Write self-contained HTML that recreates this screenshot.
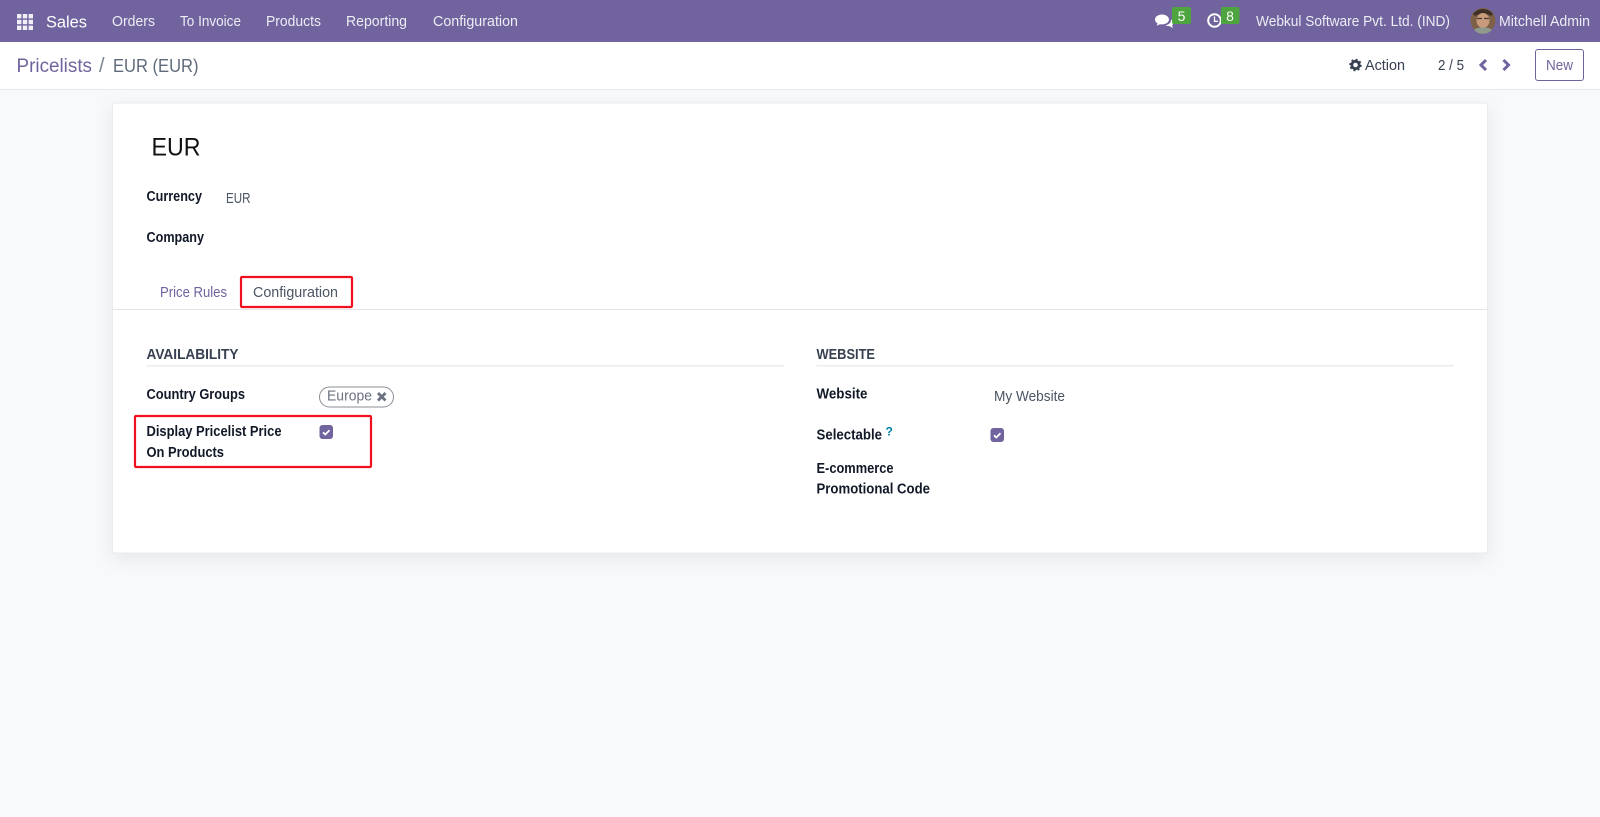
<!DOCTYPE html>
<html><head><meta charset="utf-8"><title>Pricelists</title>
<style>
html,body{margin:0;padding:0;width:1600px;height:817px;overflow:hidden;background:#f8f9fa}
svg{display:block;font-family:"Liberation Sans",sans-serif}
.n{fill:#eeecf4;font-size:14.5px}
.l{fill:#111827;font-size:14.5px;font-weight:700}
.v{fill:#4b5563;font-size:14.5px}
.h{fill:#374151;font-size:14.5px;font-weight:700}
</style></head><body>
<svg width="1600" height="817" viewBox="0 0 1600 817" xmlns="http://www.w3.org/2000/svg">
<defs><filter id="s" x="-5%" y="-10%" width="110%" height="125%"><feDropShadow dx="0" dy="5" stdDeviation="9" flood-color="#000" flood-opacity=".07"/></filter></defs>
<rect width="1600" height="817" fill="#f8f9fa"/>
<rect width="1600" height="42" fill="#71639e"/>
<rect y="42" width="1600" height="47" fill="#fff"/>
<rect y="89" width="1600" height="1" fill="#e7e9ed"/>

<g fill="#f1eff6">
<rect x="17" y="14" width="4.4" height="4.4"/><rect x="22.8" y="14" width="4.4" height="4.4"/><rect x="28.6" y="14" width="4.4" height="4.4"/>
<rect x="17" y="19.8" width="4.4" height="4.4"/><rect x="22.8" y="19.8" width="4.4" height="4.4"/><rect x="28.6" y="19.8" width="4.4" height="4.4"/>
<rect x="17" y="25.6" width="4.4" height="4.4"/><rect x="22.8" y="25.6" width="4.4" height="4.4"/><rect x="28.6" y="25.6" width="4.4" height="4.4"/>
</g>
<text x="46" y="27.500" fill="#fff" font-size="17" textLength="41" lengthAdjust="spacingAndGlyphs">Sales</text>
<text class="n" x="112" y="26" textLength="43" lengthAdjust="spacingAndGlyphs">Orders</text>
<text class="n" x="180" y="26" textLength="61" lengthAdjust="spacingAndGlyphs">To Invoice</text>
<text class="n" x="266" y="26" textLength="55" lengthAdjust="spacingAndGlyphs">Products</text>
<text class="n" x="346" y="26" textLength="61" lengthAdjust="spacingAndGlyphs">Reporting</text>
<text class="n" x="433" y="26" textLength="85" lengthAdjust="spacingAndGlyphs">Configuration</text>

<path d="M1162 14.500c-3.900 0-7 2.200-7 5 0 1.600 1 3 2.600 3.900l-.9 2.300 3.300-1.500c.6.100 1.300.2 2 .2 3.900 0 7-2.200 7-4.900s-3.100-5-7-5z" fill="#fff"/>
<path d="M1171 19.500c1.500.8 2.400 2 2.400 3.300 0 1-.5 1.900-1.400 2.600l1 2.600-4-2c-1.300 0-2.500-.3-3.500-.8 3.500-.4 5.800-2.800 5.500-5.700z" fill="#fff"/>
<rect x="1172" y="7" width="19" height="17" rx="2" fill="#4ea53f"/>
<text x="1181.500" y="21" fill="#fff" font-size="14" text-anchor="middle">5</text>
<circle cx="1214.500" cy="20.500" r="6.300" fill="none" stroke="#fff" stroke-width="2"/>
<path d="M1214.500 16.500v4.800h3.500" fill="none" stroke="#fff" stroke-width="1.300"/>
<rect x="1221" y="7" width="18.500" height="17" rx="2" fill="#4ea53f"/>
<text x="1230" y="21" fill="#fff" font-size="14" text-anchor="middle">8</text>
<text class="n" x="1256" y="26" textLength="194" lengthAdjust="spacingAndGlyphs">Webkul Software Pvt. Ltd. (IND)</text>
<circle cx="1483" cy="20.500" r="12.500" fill="#7d6046"/>
<path d="M1473 14a12.500 12.500 0 0 1 20 0l-2 2c-4-3-12-3-16 0z" fill="#3e3026"/>
<ellipse cx="1483" cy="20.500" rx="6.500" ry="7.500" fill="#c99b7c"/>
<path d="M1477 18.500h5M1484 18.500h5" stroke="#4a3b30" stroke-width="1.200"/>
<path d="M1474 30c3-3.500 15-3.500 18 0a12.500 12.500 0 0 1-18 0z" fill="#8f9a8c"/>
<text class="n" x="1499" y="26" textLength="91" lengthAdjust="spacingAndGlyphs">Mitchell Admin</text>

<text x="16.500" y="72" fill="#71639e" font-size="19.500" textLength="75.500" lengthAdjust="spacingAndGlyphs">Pricelists</text>
<text x="99" y="72" fill="#7b8490" font-size="20">/</text>
<text x="113" y="72" fill="#5f6b7a" font-size="18.500" textLength="85.500" lengthAdjust="spacingAndGlyphs">EUR (EUR)</text>

<circle cx="1355.500" cy="65" r="3.700" fill="none" stroke="#374151" stroke-width="2.800"/>
<circle cx="1355.500" cy="65" r="5.500" fill="none" stroke="#374151" stroke-width="1.500" stroke-dasharray="2 2.300"/>
<text x="1365" y="70" fill="#374151" font-size="14.500" textLength="40" lengthAdjust="spacingAndGlyphs">Action</text>
<text x="1438" y="70" fill="#374151" font-size="14.500" textLength="26" lengthAdjust="spacingAndGlyphs">2 / 5</text>
<path d="M1486 60l-5 5 5 5" fill="none" stroke="#71639e" stroke-width="3"/>
<path d="M1503.500 60l5 5-5 5" fill="none" stroke="#71639e" stroke-width="3"/>
<rect x="1535.500" y="49.500" width="48" height="31" rx="2.500" fill="#fff" stroke="#71639e"/>
<text x="1546" y="70" fill="#71639e" font-size="14.500" textLength="27" lengthAdjust="spacingAndGlyphs">New</text>

<rect x="112.500" y="103" width="1375" height="450" fill="#fff" stroke="#e9ebee" stroke-width="1" filter="url(#s)"/>

<text x="151.500" y="155.500" fill="#111" font-size="25" textLength="49" lengthAdjust="spacingAndGlyphs">EUR</text>
<text class="l" x="146.500" y="201" textLength="55.500" lengthAdjust="spacingAndGlyphs">Currency</text>
<text class="v" x="226" y="203" font-size="14" textLength="24.500" lengthAdjust="spacingAndGlyphs">EUR</text>
<text class="l" x="146.500" y="242" textLength="57.500" lengthAdjust="spacingAndGlyphs">Company</text>

<rect x="113" y="309" width="1374" height="1" fill="#e3e5e9"/>
<text x="160" y="297" fill="#71639e" font-size="14.500" textLength="67" lengthAdjust="spacingAndGlyphs">Price Rules</text>
<text x="253" y="297" fill="#4b5563" font-size="14.500" textLength="85" lengthAdjust="spacingAndGlyphs">Configuration</text>
<rect x="241" y="277" width="111" height="30" fill="none" stroke="#f01020" stroke-width="2.200" rx="1"/>

<text class="h" x="146.500" y="359" textLength="92" lengthAdjust="spacingAndGlyphs">AVAILABILITY</text>
<rect x="146.500" y="365" width="637.500" height="1.500" fill="#eaecef"/>
<text class="l" x="146.500" y="399" textLength="98.500" lengthAdjust="spacingAndGlyphs">Country Groups</text>
<rect x="319.500" y="387" width="74" height="20" rx="10" fill="#fff" stroke="#8a8f96"/>
<text x="327" y="400.500" fill="#6b7280" font-size="14.500" textLength="45" lengthAdjust="spacingAndGlyphs">Europe</text>
<path d="M378 393l7.500 7.500M385.500 393l-7.500 7.500" stroke="#6b7280" stroke-width="2.800"/>
<text class="l" x="146.500" y="436" textLength="135" lengthAdjust="spacingAndGlyphs">Display Pricelist Price</text>
<text class="l" x="146.500" y="457" textLength="77.500" lengthAdjust="spacingAndGlyphs">On Products</text>
<rect x="319.500" y="425" width="13.500" height="14" rx="3" fill="#71639e"/>
<path d="M323 432.300l2.300 2.200 4.200-4.200" fill="none" stroke="#fff" stroke-width="1.800"/>
<rect x="135" y="416" width="236" height="51" fill="none" stroke="#f01020" stroke-width="2.200" rx="1"/>

<text class="h" x="816.500" y="359" textLength="58.500" lengthAdjust="spacingAndGlyphs">WEBSITE</text>
<rect x="816.500" y="365" width="637.500" height="1.500" fill="#eaecef"/>
<text class="l" x="816.500" y="398.500" textLength="51" lengthAdjust="spacingAndGlyphs">Website</text>
<text class="v" x="994" y="401" textLength="71" lengthAdjust="spacingAndGlyphs">My Website</text>
<text class="l" x="816.500" y="439.500" textLength="65.500" lengthAdjust="spacingAndGlyphs">Selectable</text>
<text x="885.500" y="435.500" fill="#0180a5" font-size="12" font-weight="700">?</text>
<rect x="990.500" y="428" width="13.500" height="14" rx="3" fill="#71639e"/>
<path d="M994 435.300l2.300 2.200 4.200-4.200" fill="none" stroke="#fff" stroke-width="1.800"/>
<text class="l" x="816.500" y="473" textLength="77" lengthAdjust="spacingAndGlyphs">E-commerce</text>
<text class="l" x="816.500" y="493.500" textLength="113.500" lengthAdjust="spacingAndGlyphs">Promotional Code</text>
</svg>
</body></html>
